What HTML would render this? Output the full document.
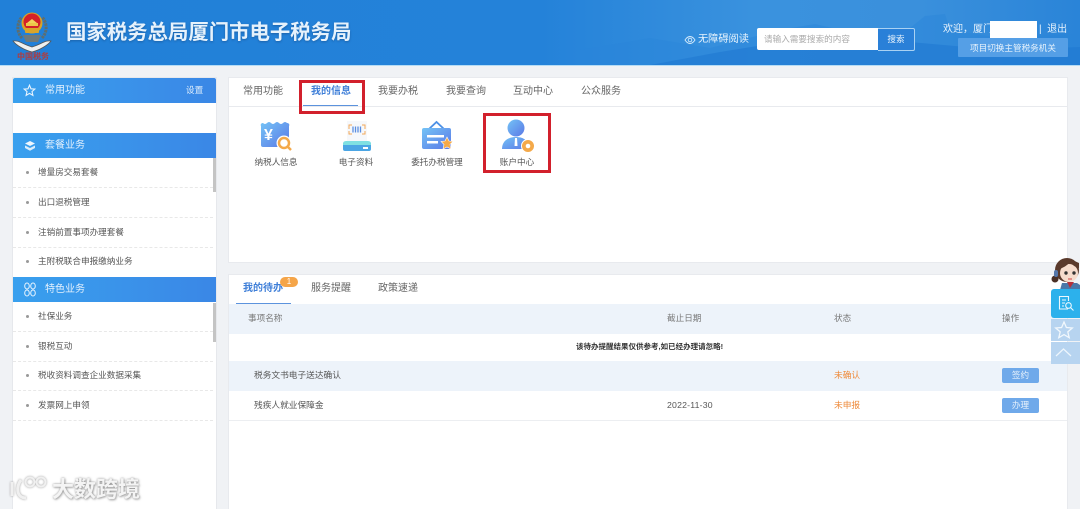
<!DOCTYPE html>
<html lang="zh-CN">
<head>
<meta charset="utf-8">
<title>国家税务总局厦门市电子税务局</title>
<style>
html,body{margin:0;padding:0}
body{width:1080px;height:509px;overflow:hidden;background:#f0f2f5;position:relative;font-family:"Liberation Sans","Noto Sans CJK SC",sans-serif;color:#555}
#w{position:absolute;left:0;top:0;width:1080px;height:509px;overflow:hidden;filter:blur(.35px)}
.a{position:absolute;white-space:nowrap}
#hd{left:0;top:0;width:1080px;height:65px;background:linear-gradient(90deg,#2180d8 0,#2482d9 50%,#3a92de 70%,#3a90dc 85%,#2a84d8 100%);border-bottom:1px solid #b5dcf5;overflow:hidden}
.side{left:13px;top:78px;width:203px;height:431px;background:#fff;box-shadow:0 0 0 1px #e6e8ec}
.bar{left:13px;width:203px;height:25px;background:linear-gradient(90deg,#39a0ee,#3a87e6);color:#e4f1fd;font-size:10px;line-height:25px}
.bar span{position:absolute;left:32px;top:0}
.it{left:13px;width:200px;height:29px;border-bottom:1px dashed #e8e8e8;font-size:8.6px;line-height:29px;color:#555}
.it i{position:absolute;left:13px;top:13px;width:3px;height:3px;border-radius:50%;background:#999}
.it span{position:absolute;left:25px;top:0}
.panel{left:229px;width:838px;background:#fff;box-shadow:0 0 0 1px #e8eaee}
.tab{font-size:10px;color:#666;line-height:14px}
.cap{font-size:8.6px;color:#555;text-align:center;line-height:12px}
.th{font-size:8.6px;color:#777;line-height:12px}
.td{font-size:8.7px;color:#555;line-height:12px}
.btn{width:37px;height:15px;border-radius:2px;background:#6fa9ea;color:#e6f1fc;font-size:8.6px;line-height:15px;text-align:center}
.red{border:3px solid #d2202c;box-sizing:border-box}
</style>
</head>
<body>
<div id="w">
<div class="a" id="hd">
<svg class="a" style="left:580px;top:0" width="500" height="65" viewBox="0 0 500 65">
<path d="M0 50L70 38 130 48 200 30 235 24 270 32 320 36 345 16 365 14 370 30 420 38 500 34V65H0Z" fill="#2a86d9" opacity=".45"/>
<path d="M70 65L140 52 240 36 330 42 420 50 500 47V65Z" fill="#2079d2" opacity=".65"/>
</svg>
</div>
<svg class="a" style="left:12px;top:6px" width="40" height="54" viewBox="0 0 40 54">
<path d="M1 35C7 34 10 38 20 41 30 38 33 34 39 35 36 39 28 44 20 46 12 44 4 39 1 35Z" fill="#eef0f0" stroke="#555" stroke-width=".8"/>
<path d="M10 32C4 26 5 16 10 11M30 32C36 26 35 16 30 11" fill="none" stroke="#5d6e70" stroke-width="3" stroke-dasharray="2.500 .8"/>
<circle cx="20" cy="17" r="10.500" fill="#d8a328"/>
<circle cx="20" cy="16" r="8.500" fill="#d4202a"/>
<rect x="14" y="17" width="12" height="3" fill="#edc648"/>
<path d="M15 17L20 13 25 17Z" fill="#f2d35a"/>
<rect x="13" y="22" width="14" height="5" rx="1" fill="#d9a52a"/>
<path d="M11 29H29L26 36H14Z" fill="#6e7a7c"/>
<text x="5" y="53" font-size="8" fill="#b33a3a" font-family="Liberation Sans,Noto Sans CJK SC,sans-serif" font-weight="700">中国税务</text>
</svg>
<div class="a" style="left:66px;top:22px;font-size:20.4px;line-height:23px;font-weight:700;color:#e6f2fc;text-shadow:0 1px 2px rgba(20,60,110,.45)">国家税务总局厦门市电子税务局</div>

<svg class="a" style="left:684px;top:35px" width="12" height="10" viewBox="0 0 12 10"><path d="M1 5C3 2 5 1.500 6 1.500S9 2 11 5C9 8 7 8.500 6 8.500S3 8 1 5Z" fill="none" stroke="#d6ebfb" stroke-width=".9"/><circle cx="6" cy="5" r="1.800" fill="none" stroke="#d6ebfb" stroke-width=".9"/></svg>
<div class="a" style="left:698px;top:32px;font-size:10.2px;line-height:15px;color:#e6f3fd">无障碍阅读</div>
<div class="a" style="left:757px;top:28px;width:121px;height:22px;background:#fff;border-radius:2px 0 0 2px;font-size:8.6px;line-height:23px;color:#aaa;text-indent:7px">请输入需要搜索的内容</div>
<div class="a" style="left:878px;top:28px;width:36px;height:21px;background:#2a80d8;border:1px solid #a9d2f3;border-left:0;border-radius:0 2px 2px 0;font-size:8.6px;line-height:21px;color:#eaf4fd;text-align:center">搜索</div>
<div class="a" style="left:943px;top:23px;font-size:10px;line-height:14px;color:#e8f3fc">欢迎，厦门</div>
<div class="a" style="left:990px;top:21px;width:47px;height:18px;background:#fff"></div>
<div class="a" style="left:1039px;top:23px;font-size:10px;line-height:14px;color:#e8f3fc">|&nbsp;&nbsp;退出</div>
<div class="a" style="left:958px;top:38px;width:110px;height:19px;background:#559fe6;border-radius:1px;font-size:8.6px;line-height:20px;color:#e8f3fc;text-align:center">项目切换主管税务机关</div>

<div class="a side"></div>
<div class="a bar" style="top:78px;border-radius:2px 2px 0 0"><svg class="a" style="left:10px;top:6px" width="13" height="13" viewBox="0 0 13 13"><path d="M6.500 1.200L8 4.800 11.800 5.100 9 7.600 9.900 11.400 6.500 9.400 3.100 11.400 4 7.600 1.200 5.100 5 4.800Z" fill="none" stroke="#e8f4fe" stroke-width="1.100"/></svg><span>常用功能</span><span style="left:173px;font-size:8.6px">设置</span></div>
<div class="a bar" style="top:133px"><svg class="a" style="left:11px;top:7px" width="12" height="12" viewBox="0 0 12 12"><path d="M6 1L11 3.500 6 6 1 3.500Z" fill="#eef7fe"/><path d="M1 5.500L6 8 11 5.500V8L6 10.800 1 8Z" fill="#d9edfc"/></svg><span>套餐业务</span></div>
<div class="a it" style="top:158px"><i></i><span>增量房交易套餐</span></div>
<div class="a it" style="top:188px"><i></i><span>出口退税管理</span></div>
<div class="a it" style="top:218px"><i></i><span>注销前置事项办理套餐</span></div>
<div class="a it" style="top:247px;border:0"><i></i><span>主附税联合申报缴纳业务</span></div>
<div class="a" style="left:213px;top:158px;width:3px;height:34px;background:#c4c4c4"></div>
<div class="a bar" style="top:277px"><svg class="a" style="left:11px;top:5px" width="12" height="15" viewBox="0 0 12 15" fill="none" stroke="#e8f4fe" stroke-width="1"><ellipse cx="3" cy="4" rx="2.300" ry="3"/><ellipse cx="9" cy="4" rx="2.300" ry="3"/><ellipse cx="3" cy="11" rx="2.300" ry="3"/><ellipse cx="9" cy="11" rx="2.300" ry="3"/></svg><span>特色业务</span></div>
<div class="a it" style="top:302px"><i></i><span>社保业务</span></div>
<div class="a it" style="top:332px"><i></i><span>银税互动</span></div>
<div class="a it" style="top:361px"><i></i><span>税收资料调查企业数据采集</span></div>
<div class="a it" style="top:391px"><i></i><span>发票网上申领</span></div>
<div class="a" style="left:213px;top:303px;width:3px;height:39px;background:#c4c4c4"></div>

<div class="a panel" style="top:78px;height:184px"></div>
<div class="a" style="left:229px;top:106px;width:838px;height:1px;background:#e8eaee"></div>
<div class="a tab" style="left:243px;top:85px">常用功能</div>
<div class="a tab" style="left:311px;top:85px;color:#3f7fd8;font-weight:700">我的信息</div>
<div class="a" style="left:303px;top:105px;width:55px;height:1px;background:#5c93dd"></div>
<div class="a tab" style="left:378px;top:85px">我要办税</div>
<div class="a tab" style="left:446px;top:85px">我要查询</div>
<div class="a tab" style="left:513px;top:85px">互动中心</div>
<div class="a tab" style="left:581px;top:85px">公众服务</div>
<div class="a red" style="left:299px;top:80px;width:66px;height:34px"></div>
<div class="a red" style="left:483px;top:113px;width:68px;height:60px"></div>

<svg class="a" style="left:260px;top:121px" width="32" height="32" viewBox="0 0 32 32"><defs><linearGradient id="g1" x1="0" y1="0" x2="1" y2="1"><stop offset="0" stop-color="#74c3f6"/><stop offset="1" stop-color="#5a78e6"/></linearGradient></defs><path d="M1 5A2 2 0 0 1 3 2Q5 4 7 2T11 2 15 2 19 2 23 2 27 2A2 2 0 0 1 29 5V24A2 2 0 0 1 27 26H3A2 2 0 0 1 1 24Z" fill="url(#g1)"/><text x="4" y="19" font-size="16" font-weight="700" fill="#fff" font-family="Liberation Sans,sans-serif">¥</text><circle cx="24" cy="22" r="7.500" fill="#fff"/><circle cx="24" cy="22" r="5" fill="#fff" stroke="#f4a94a" stroke-width="2.500"/><path d="M27.500 25.500L31 29" stroke="#f4a94a" stroke-width="2.500"/></svg>
<svg class="a" style="left:341px;top:120px" width="32" height="32" viewBox="0 0 32 32"><rect x="6" y="1" width="20" height="20" fill="#f6f8fb"/><path d="M8 9V5H11M24 9V5H21M8 11V14H11M24 11V14H21" fill="none" stroke="#f3a95a"/><path d="M12 6.500V12.500M14.500 6.500V12.500M17 6.500V12.500M19.500 6.500V12.500" stroke="#5b8ee0" stroke-width="1.300"/><path d="M4 22H28Q30 22 30 24V29Q30 31 28 31H4Q2 31 2 29V24Q2 22 4 22Z" fill="#4ba5e4"/><path d="M2 24Q2 21 5 21H27Q30 21 30 24V25H2Z" fill="#7fe0e2"/><rect x="22" y="27" width="5" height="2" fill="#fff"/></svg>
<svg class="a" style="left:421px;top:120px" width="33" height="32" viewBox="0 0 33 32"><path d="M8 9L15.500 2 23 9" fill="none" stroke="#4c90e6" stroke-width="1.800"/><path d="M3 8H28Q30 8 30 10V27Q30 29 28 29H3Q1 29 1 27V10Q1 8 3 8Z" fill="url(#g1)"/><rect x="6" y="15" width="17" height="2.500" fill="#fff"/><rect x="6" y="21" width="11" height="2.500" fill="#fff"/><path d="M26 17L28 21 32 21.500 29 24.500 30 29 26 27 22 29 23 24.500 20 21.500 24 21Z" fill="#f4a94a" stroke="#fff" stroke-width=".6"/></svg>
<svg class="a" style="left:501px;top:119px" width="34" height="34" viewBox="0 0 34 34"><circle cx="15" cy="9" r="8.500" fill="url(#g1)"/><path d="M1 30C1 22 7 18 15 18S28 22 29 30Z" fill="url(#g1)"/><path d="M14 19H16L16.500 27H13.500Z" fill="#fff"/><circle cx="27" cy="27" r="6.500" fill="#f4a94a" stroke="#fff" stroke-width="1"/><circle cx="27" cy="27" r="2.300" fill="#fff"/></svg>
<div class="a cap" style="left:236px;top:156px;width:80px">纳税人信息</div>
<div class="a cap" style="left:316px;top:156px;width:80px">电子资料</div>
<div class="a cap" style="left:397px;top:156px;width:80px">委托办税管理</div>
<div class="a cap" style="left:477px;top:156px;width:80px">账户中心</div>

<div class="a panel" style="top:275px;height:234px"></div>
<div class="a tab" style="left:243px;top:282px;color:#3f7fd8;font-weight:700">我的待办</div>
<div class="a" style="left:280px;top:277px;width:18px;height:10px;background:#f5a549;border-radius:5px;color:#fff;font-size:8px;line-height:10px;text-align:center">1</div>
<div class="a" style="left:236px;top:303px;width:55px;height:1px;background:#5c93dd"></div>
<div class="a tab" style="left:311px;top:282px">服务提醒</div>
<div class="a tab" style="left:378px;top:282px">政策速递</div>
<div class="a" style="left:229px;top:304px;width:838px;height:30px;background:#edf3fa"></div>
<div class="a th" style="left:248px;top:312px">事项名称</div>
<div class="a th" style="left:667px;top:312px">截止日期</div>
<div class="a th" style="left:834px;top:312px">状态</div>
<div class="a th" style="left:1002px;top:312px">操作</div>
<div class="a" style="left:576px;top:341px;font-size:7.5px;line-height:12px;font-weight:700;color:#333">该待办提醒结果仅供参考,如已经办理请忽略!</div>
<div class="a" style="left:229px;top:361px;width:838px;height:30px;background:#edf3fa"></div>
<div class="a" style="left:229px;top:420px;width:838px;height:1px;background:#eceef1"></div>
<div class="a td" style="left:254px;top:369px">税务文书电子送达确认</div>
<div class="a td" style="left:834px;top:369px;color:#ee8a3a">未确认</div>
<div class="a btn" style="left:1002px;top:368px">签约</div>
<div class="a td" style="left:254px;top:399px">残疾人就业保障金</div>
<div class="a td" style="left:667px;top:399px;letter-spacing:.2px">2022-11-30</div>
<div class="a td" style="left:834px;top:399px;color:#ee8a3a">未申报</div>
<div class="a btn" style="left:1002px;top:398px">办理</div>

<svg class="a" style="left:1050px;top:258px" width="30" height="32" viewBox="0 0 30 32"><circle cx="17" cy="12" r="12" fill="#5a3a2c"/><circle cx="19" cy="15" r="9" fill="#f6dccd"/><path d="M9 11Q16 9 20 4 24 9 29 10V5L20 1 10 5Z" fill="#5a3a2c"/><circle cx="16" cy="15" r="1.700" fill="#333"/><circle cx="24" cy="15" r="1.700" fill="#333"/><path d="M18 21H22" stroke="#c44"/><circle cx="5" cy="21" r="3.500" fill="#4a3026"/><rect x="4" y="12" width="4" height="7" rx="2" fill="#5577aa"/><path d="M10 32L12 25H27L30 27V32Z" fill="#4a78a8"/><path d="M17 24L20 30 24 24Z" fill="#b7303a"/></svg>
<div class="a" style="left:1051px;top:289px;width:29px;height:29px;background:#2cb1ec;border-radius:3px 0 0 3px"></div>
<svg class="a" style="left:1058px;top:295px" width="17" height="17" viewBox="0 0 17 17" fill="none" stroke="#eaf7fe" stroke-width="1.100"><path d="M10 14H1.500V1.500H10.500V6"/><path d="M4 5H8M4 8H7M4 11H6"/><circle cx="10.500" cy="10.500" r="2.800"/><path d="M12.500 12.500L15.500 15.500"/></svg>
<div class="a" style="left:1051px;top:319px;width:29px;height:22px;background:#b7d4f0"></div>
<svg class="a" style="left:1054px;top:320px" width="20" height="20" viewBox="0 0 20 20"><path d="M10 2L12.400 7.500 18.300 8 13.800 11.900 15.200 17.700 10 14.600 4.800 17.700 6.200 11.900 1.700 8 7.600 7.500Z" fill="none" stroke="#f2f8fd" stroke-width="1.300"/></svg>
<div class="a" style="left:1051px;top:342px;width:29px;height:22px;background:#b7d4f0"></div>
<svg class="a" style="left:1055px;top:347px" width="17" height="10" viewBox="0 0 17 10"><path d="M1 9L8.500 2 16 9" fill="none" stroke="#eef6fc" stroke-width="1.200"/></svg>

<div class="a" style="left:52px;top:477px;font-size:22px;line-height:25px;font-weight:700;color:#f4f4f4;text-shadow:0 0 2px rgba(110,110,110,.7),1px 1px 2px rgba(110,110,110,.5)">大数跨境</div>
<svg class="a" style="left:8px;top:474px;filter:drop-shadow(0 0 1px #999)" width="42" height="28" viewBox="0 0 42 28" fill="none" stroke="#f0f0f0" stroke-width="3"><path d="M4 8V22M13 6C8 12 8 24 18 24"/><circle cx="22" cy="8" r="4.500" stroke-width="2"/><circle cx="33" cy="8" r="4.500" stroke-width="2"/></svg>
</div>
</body>
</html>
